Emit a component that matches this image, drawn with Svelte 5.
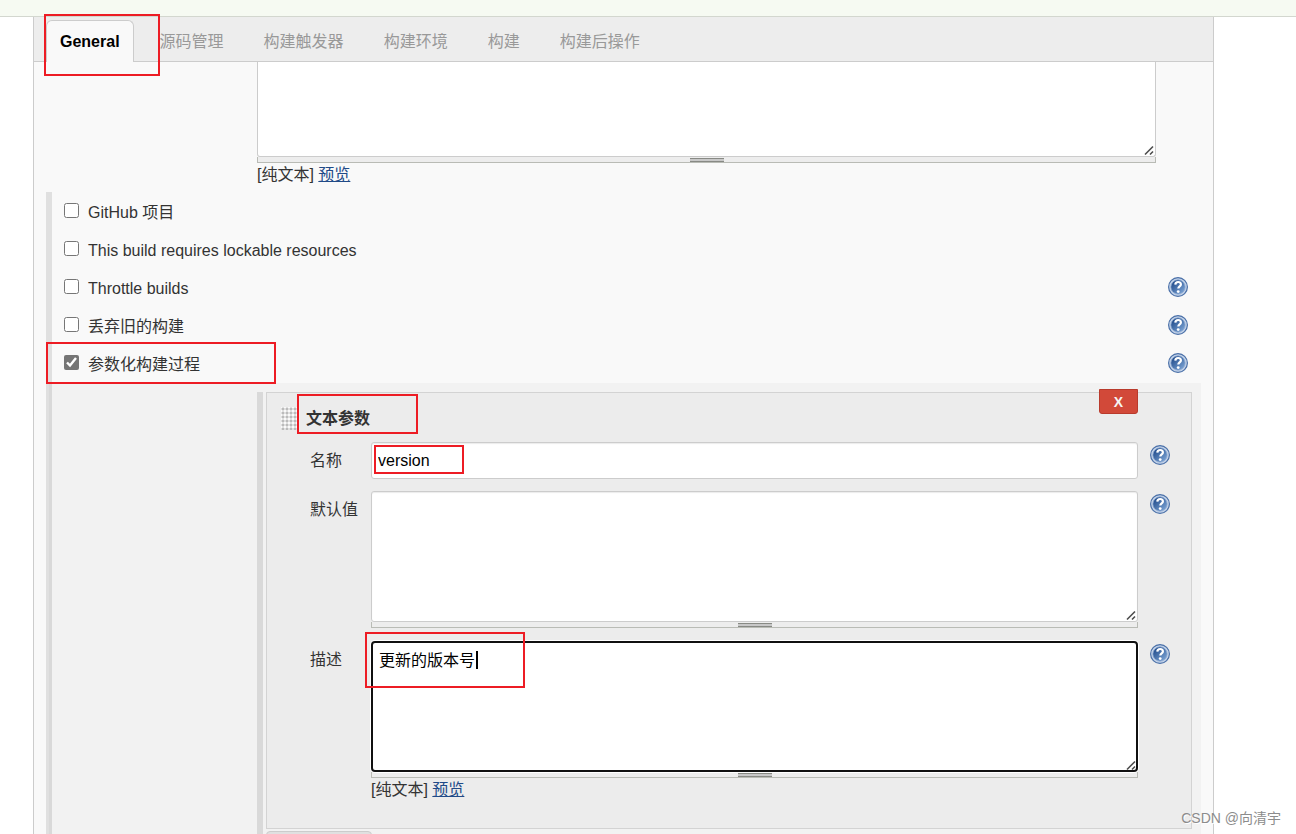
<script lang="ts">
  const tabs = ['General', '源码管理', '构建触发器', '构建环境', '构建', '构建后操作'];

  let activeTab = $state('General');

  let options = $state([
    { id: 'github', label: 'GitHub 项目', checked: false, help: false },
    { id: 'lockable', label: 'This build requires lockable resources', checked: false, help: false },
    { id: 'throttle', label: 'Throttle builds', checked: false, help: true },
    { id: 'discard', label: '丢弃旧的构建', checked: false, help: true },
    { id: 'params', label: '参数化构建过程', checked: true, help: true },
  ]);

  let projectDescription = $state('');
  let name = $state('version');
  let defaultValue = $state('');
  let description = $state('更新的版本号');
</script>

{#snippet helpButton(topic: string)}
  <button type="button" class="help" aria-label="Help: {topic}">
    <svg viewBox="0 0 20 20" width="20" height="20" aria-hidden="true">
      <defs>
        <linearGradient id="help-fill" x1="0" y1="0" x2="1" y2="1">
          <stop offset="0.1" stop-color="#1f4a8a" />
          <stop offset="0.9" stop-color="#7ba3d4" />
        </linearGradient>
      </defs>
      <circle cx="10" cy="10" r="9.4" fill="#c6d5ea" stroke="#4a70a8" stroke-width="1.2" />
      <circle cx="10" cy="10" r="7.2" fill="url(#help-fill)" stroke="#8fabd2" stroke-width="0.8" />
      <path
        d="M7.3 7.6C7.4 5.9 8.5 5 10.1 5c1.7 0 2.8 1 2.8 2.4 0 2-2.6 2.1-2.6 4.2"
        fill="none"
        stroke="#fff"
        stroke-width="2.2"
      />
      <circle cx="10.2" cy="14.6" r="1.4" fill="#fff" />
    </svg>
  </button>
{/snippet}

{#snippet markup()}
  <div class="markup">[纯文本] <a href="#preview">预览</a></div>
{/snippet}

{#snippet corner()}
  <svg class="corner" viewBox="0 0 12 12" width="12" height="12" aria-hidden="true">
    <path d="M2 10.5l8-8M7 10.5l3-3" fill="none" stroke="#4d4d4d" stroke-width="1.6" />
  </svg>
{/snippet}

<div class="page">
  <div class="breadcrumbs"></div>

  <main class="config">
    <div class="tab-bar" role="tablist">
      {#each tabs as tab}
        <button
          type="button"
          role="tab"
          class="tab"
          class:active={tab === activeTab}
          aria-selected={tab === activeTab}
          onclick={() => (activeTab = tab)}
        >
          {tab}
          {#if tab === 'General'}<span class="mark mark-tab"></span>{/if}
        </button>
      {/each}
    </div>

    <form class="form">
      <div class="project-description">
        <div class="area-wrap">
          <textarea class="area area-cut" aria-label="描述" bind:value={projectDescription}></textarea>
          {@render corner()}
        </div>
        <div class="resize-bar"><span class="grip"></span></div>
        {@render markup()}
      </div>

      <section class="options">
        {#each options as option (option.id)}
          <div class="option">
            <input type="checkbox" id={option.id} bind:checked={option.checked} />
            <label for={option.id}>{option.label}</label>
            {#if option.help}{@render helpButton(option.label)}{/if}
            {#if option.id === 'params'}<span class="mark mark-option"></span>{/if}
          </div>
        {/each}

        <div class="nested">
          <div class="repeated">
            <div class="parameter">
              <button type="button" class="delete">X</button>

              <div class="parameter-head">
                <span class="drag"></span>
                <strong>文本参数</strong>
                <span class="mark mark-title"></span>
              </div>

              <div class="fields">
                <label for="name">名称</label>
                <div class="field">
                  <input type="text" class="text" id="name" bind:value={name} />
                  <span class="mark mark-name"></span>
                </div>
                {@render helpButton('名称')}

                <label for="default">默认值</label>
                <div class="field">
                  <div class="area-wrap">
                    <textarea class="area" id="default" bind:value={defaultValue}></textarea>
                    {@render corner()}
                  </div>
                  <div class="resize-bar"><span class="grip"></span></div>
                </div>
                {@render helpButton('默认值')}

                <label for="description">描述</label>
                <div class="field">
                  <div class="area-wrap">
                    <textarea class="area focused" id="description" bind:value={description}></textarea>
                    <span class="caret"></span>
                    {@render corner()}
                  </div>
                  <div class="resize-bar"><span class="grip"></span></div>
                  {@render markup()}
                  <span class="mark mark-description"></span>
                </div>
                {@render helpButton('描述')}
              </div>
            </div>

            <button type="button" class="add" aria-label="添加参数"></button>
          </div>
        </div>
      </section>
    </form>
  </main>

  <div class="watermark">CSDN @向清宇</div>
</div>

<style>
  .page {
    position: relative;
    height: 100vh;
    overflow: hidden;
    background: #fff;
    color: #333;
    font: 16px/22px 'Liberation Sans', 'Noto Sans CJK SC', sans-serif;
  }

  .page * {
    box-sizing: border-box;
  }

  button,
  input,
  textarea {
    margin: 0;
    font: inherit;
  }

  .breadcrumbs {
    height: 17px;
    background: #f6faf2;
    border-bottom: 1px solid #d3d7cf;
  }

  .config {
    margin: 0 82px 0 33px;
    background: #f9f9f9;
    border: solid #ccc;
    border-width: 0 1px;
  }

  .tab-bar {
    display: flex;
    align-items: flex-end;
    height: 45px;
    padding-left: 12px;
    background: #ededed;
    border-bottom: 1px solid #ccc;
  }

  .tab {
    position: relative;
    height: 42px;
    margin-bottom: -1px;
    padding: 2px 20px 0;
    background: none;
    border: 0;
    color: #999;
    white-space: nowrap;
  }

  .tab.active {
    margin-right: 6px;
    padding: 0 13px;
    background: #f9f9f9;
    border: 1px solid #ccc;
    border-bottom: 0;
    border-radius: 6px 6px 0 0;
    color: #000;
    font-weight: 700;
  }

  .form {
    padding: 0 12px;
  }

  .project-description {
    padding: 0 45px 6px 211px;
  }

  .area-wrap {
    position: relative;
  }

  .area,
  .text {
    display: block;
    width: 100%;
    background: #fff;
    border: 1px solid #ccc;
    border-radius: 3px;
    box-shadow: inset 0 1px 1px rgba(0, 0, 0, 0.08);
    color: #000;
  }

  .area {
    height: 131px;
    padding: 8px 7px;
    resize: none;
  }

  .area-cut {
    height: 95px;
    border-top: 0;
    border-radius: 0 0 3px 3px;
    box-shadow: none;
  }

  .area.focused {
    padding: 7px 6px;
    border: 2px solid #101010;
    border-radius: 4px;
    box-shadow: 0 0 0 1px #fff;
    outline: none;
  }

  .text {
    height: 37px;
    padding: 0 6px;
  }

  .corner {
    position: absolute;
    right: 1px;
    bottom: 1px;
    pointer-events: none;
  }

  .resize-bar {
    display: flex;
    justify-content: center;
    height: 6px;
    margin-bottom: 1px;
    padding-top: 1px;
    background: #ededed;
    border: 1px solid #b9bbb5;
    border-top: 0;
  }

  .grip {
    width: 34px;
    height: 4px;
    background: #c8c8c8;
    border: solid #888a85;
    border-width: 1px 0;
  }

  .markup a {
    color: #204a87;
  }

  .options {
    border-left: 6px solid #e0e0e0;
  }

  .option {
    position: relative;
    display: flex;
    align-items: center;
    height: 38px;
    padding: 0 13px 0 12px;
  }

  .option input {
    width: 15px;
    height: 15px;
    margin: 0 9px 2px 0;
    accent-color: #757575;
  }

  .option label {
    padding-top: 4px;
  }

  .option .help {
    margin-left: auto;
  }

  .help {
    width: 20px;
    height: 20px;
    padding: 0;
    background: none;
    border: 0;
    border-radius: 50%;
    cursor: pointer;
  }

  .help svg {
    display: block;
  }

  .nested {
    margin-top: 1px;
    padding: 9px 9px 0 205px;
    background: #f2f2f2;
    box-shadow: -3px 0 #d9d9d9;
  }

  .repeated {
    padding-left: 3px;
    border-left: 6px solid #d9d9d9;
  }

  .parameter {
    position: relative;
    padding: 14px 21px 27px 14px;
    background: #ececec;
    border: 1px solid #d3d3d3;
  }

  .delete {
    position: absolute;
    top: -4px;
    right: 53px;
    width: 39px;
    height: 25px;
    padding: 0;
    background: #d24939;
    border: 1px solid #b93a2c;
    border-radius: 0 0 3px 3px;
    color: #f5f5f5;
    font-size: 14px;
    font-weight: 700;
  }

  .parameter-head {
    position: relative;
    display: flex;
    align-items: center;
    gap: 9px;
    height: 23px;
    margin-bottom: 12px;
  }

  .drag {
    width: 16px;
    height: 23px;
    background: #fafafa radial-gradient(circle, #bbb 1px, transparent 2px) 0 0 / 4px 4px;
  }

  .fields {
    display: grid;
    grid-template-columns: 61px 1fr 20px;
    row-gap: 12px;
    padding-left: 29px;
  }

  .fields label {
    padding-top: 8px;
  }

  .fields .help {
    margin-top: 3px;
  }

  .field {
    position: relative;
    margin-right: 12px;
  }

  .caret {
    position: absolute;
    top: 10px;
    left: 105px;
    width: 2px;
    height: 18px;
    background: #000;
  }

  .add {
    display: block;
    width: 106px;
    height: 36px;
    margin-top: 2px;
    background: #e0e0e0;
    border: 1px solid #ccc;
    border-radius: 4px;
  }

  /* red annotation frames */
  .mark {
    position: absolute;
    z-index: 2;
    border: 2px solid #ed1c24;
    pointer-events: none;
  }

  .mark-tab {
    top: -7px;
    left: -3px;
    width: 116px;
    height: 62px;
  }

  .mark-option {
    top: -2px;
    left: -6px;
    width: 230px;
    height: 42px;
  }

  .mark-title {
    top: -13px;
    left: 16px;
    width: 121px;
    height: 40px;
  }

  .mark-name {
    top: 3px;
    left: 3px;
    width: 90px;
    height: 29px;
  }

  .mark-description {
    top: -9px;
    left: -6px;
    width: 160px;
    height: 56px;
  }

  .watermark {
    position: absolute;
    right: 15px;
    bottom: 5px;
    z-index: 3;
    color: #8c8c8c;
    font-size: 14px;
    text-shadow: 1px 1px #fff;
  }
</style>
